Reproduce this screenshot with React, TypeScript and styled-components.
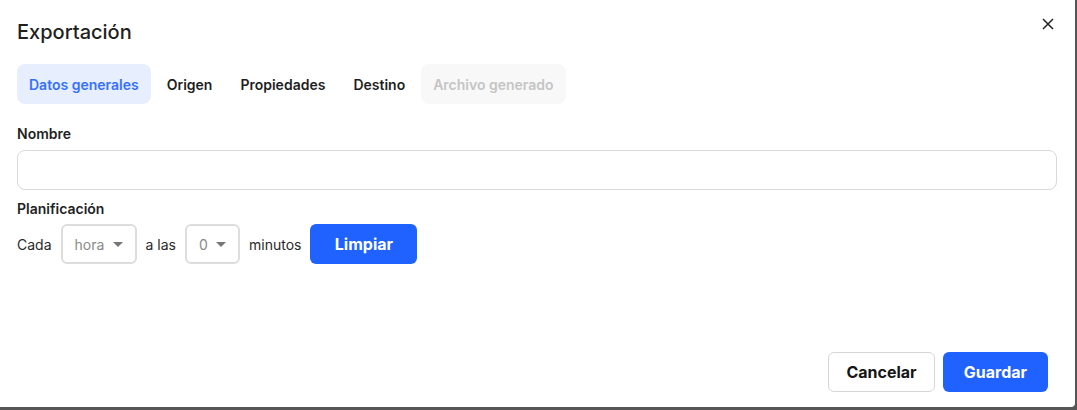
import React from "react";
import styled, { createGlobalStyle } from "styled-components";

const GlobalStyle = createGlobalStyle`
  html, body {
    margin: 0;
    padding: 0;
    background: #565656;
    font-family: Inter, "Noto Sans", sans-serif;
  }
`;

const Modal = styled.div`
  box-sizing: border-box;
  width: 1075px;
  height: 407px;
  background: #ffffff;
  border-bottom-right-radius: 4px;
  padding: 14px 20px 15px 17px;
  display: flex;
  flex-direction: column;
`;

const Header = styled.div`
  display: flex;
  align-items: center;
  justify-content: space-between;
  height: 36px;
`;

const Title = styled.h2`
  margin: 0;
  font-size: 20px;
  font-weight: 500;
  color: #1f1f1f;
`;

const CloseButton = styled.button`
  border: none;
  background: none;
  padding: 0;
  width: 20px;
  height: 20px;
  margin-right: -3px;
  margin-top: -16px;
  display: flex;
  align-items: center;
  justify-content: center;
  cursor: pointer;
`;

const Tabs = styled.div`
  display: flex;
  gap: 4px;
  margin-top: 14px;
`;

const Tab = styled.button<{ $active?: boolean; $disabled?: boolean }>`
  height: 40px;
  padding: 0 12px;
  border: none;
  border-radius: 8px;
  font-family: inherit;
  font-size: 14px;
  font-weight: 600;
  background: ${(p) => (p.$active ? "#e7eefe" : p.$disabled ? "#f8f8f8" : "transparent")};
  color: ${(p) => (p.$active ? "#3571fd" : p.$disabled ? "#c5c5c5" : "#1f1f1f")};
`;

const Label = styled.div<{ $top: number }>`
  font-size: 14px;
  font-weight: 600;
  color: #1f1f1f;
  margin-top: ${(p) => p.$top}px;
  line-height: 18px;
`;

const TextInput = styled.input`
  box-sizing: border-box;
  width: 1040px;
  height: 40px;
  margin-top: 7px;
  border: 1px solid #d9d9d9;
  border-radius: 8px;
  outline: none;
`;

const ScheduleRow = styled.div`
  display: flex;
  align-items: center;
  gap: 9px;
  margin-top: 6px;
  font-size: 14px;
  color: #2a2a2a;
`;

const Select = styled.div<{ $width: number }>`
  box-sizing: border-box;
  width: ${(p) => p.$width}px;
  height: 40px;
  border: 2px solid #dddddd;
  border-radius: 6px;
  display: flex;
  align-items: center;
  justify-content: space-between;
  padding: 0 12px;
  color: #8a8a8a;
  font-size: 14px;
`;

const Caret = styled.span`
  width: 0;
  height: 0;
  border-left: 5px solid transparent;
  border-right: 5px solid transparent;
  border-top: 5px solid #777;
`;

const Button = styled.button<{ $primary?: boolean; $width: number }>`
  box-sizing: border-box;
  width: ${(p) => p.$width}px;
  height: 40px;
  border-radius: 6px;
  font-family: inherit;
  font-size: 16px;
  font-weight: 700;
  cursor: pointer;
  border: ${(p) => (p.$primary ? "none" : "1px solid #d6d6d6")};
  background: ${(p) => (p.$primary ? "#1f62ff" : "#ffffff")};
  color: ${(p) => (p.$primary ? "#ffffff" : "#151515")};
`;

const Footer = styled.div`
  margin-top: auto;
  display: flex;
  justify-content: flex-end;
  gap: 8px;
  padding-right: 7px;
`;

export default function App() {
  return (
    <>
      <GlobalStyle />
      <Modal>
        <Header>
          <Title>Exportación</Title>
          <CloseButton aria-label="Cerrar">
            <svg width="12" height="12" viewBox="0 0 12 12">
              <path d="M1 1L11 11M11 1L1 11" stroke="#222" strokeWidth="1.5" />
            </svg>
          </CloseButton>
        </Header>
        <Tabs>
          <Tab $active>Datos generales</Tab>
          <Tab>Origen</Tab>
          <Tab>Propiedades</Tab>
          <Tab>Destino</Tab>
          <Tab $disabled>Archivo generado</Tab>
        </Tabs>
        <Label $top={21}>Nombre</Label>
        <TextInput />
        <Label $top={10}>Planificación</Label>
        <ScheduleRow>
          <span>Cada</span>
          <Select $width={76}>
            <span>hora</span>
            <Caret />
          </Select>
          <span>a las</span>
          <Select $width={55}>
            <span>0</span>
            <Caret />
          </Select>
          <span>minutos</span>
          <Button $primary $width={107}>Limpiar</Button>
        </ScheduleRow>
        <Footer>
          <Button $width={107}>Cancelar</Button>
          <Button $primary $width={105}>Guardar</Button>
        </Footer>
      </Modal>
    </>
  );
}
